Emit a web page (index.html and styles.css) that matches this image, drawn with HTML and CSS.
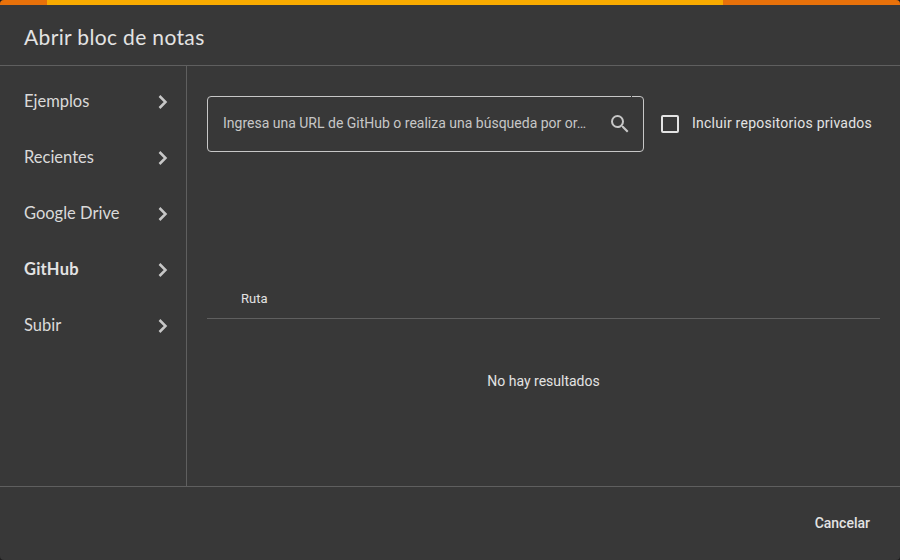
FILE: index.html
```html
<!DOCTYPE html>
<html lang="es">
<head>
<meta charset="utf-8">
<title>Abrir bloc de notas</title>
<link rel="stylesheet" href="styles.css">
</head>
<body>
<div class="dialog">
  <div class="progress"><div class="progress-bar"></div></div>
  <header class="header"><h1 class="title">Abrir bloc de notas</h1></header>
  <div class="body">
    <nav class="tabs">
      <a class="tab"><span class="tab-label">Ejemplos</span><svg class="chevron" viewBox="0 0 24 24"><path d="M9.5 6l6 6-6 6"/></svg></a>
      <a class="tab"><span class="tab-label">Recientes</span><svg class="chevron" viewBox="0 0 24 24"><path d="M9.5 6l6 6-6 6"/></svg></a>
      <a class="tab"><span class="tab-label">Google Drive</span><svg class="chevron" viewBox="0 0 24 24"><path d="M9.5 6l6 6-6 6"/></svg></a>
      <a class="tab selected"><span class="tab-label">GitHub</span><svg class="chevron" viewBox="0 0 24 24"><path d="M9.5 6l6 6-6 6"/></svg></a>
      <a class="tab"><span class="tab-label">Subir</span><svg class="chevron" viewBox="0 0 24 24"><path d="M9.5 6l6 6-6 6"/></svg></a>
    </nav>
    <main class="content">
      <div class="search-row">
        <div class="field">
          <span class="placeholder">Ingresa una URL de GitHub o realiza una búsqueda por or…</span>
          <svg class="search" viewBox="0 0 24 24"><path d="M15.5 14h-.79l-.28-.27A6.47 6.47 0 0 0 16 9.5 6.5 6.5 0 1 0 9.5 16c1.61 0 3.09-.59 4.23-1.57l.27.28v.79l5 4.99L20.49 19l-4.99-5zm-6 0C7.01 14 5 11.99 5 9.5S7.01 5 9.5 5 14 7.01 14 9.5 11.99 14 9.5 14z"/></svg>
        </div>
        <label class="private"><span class="checkbox"></span><span class="private-label">Incluir repositorios privados</span></label>
      </div>
      <div class="table-head">Ruta</div>
      <div class="empty">No hay resultados</div>
    </main>
  </div>
  <footer class="footer"><span class="cancel">Cancelar</span></footer>
</div>
</body>
</html>
```
FILE: styles.css
```css
* { box-sizing: border-box; }
body { margin: 0; background: #1d1c1d; font-family: Roboto, sans-serif; color: #e3e3e3; }
.dialog { display: flex; flex-direction: column; width: 900px; height: 560px; background: #383838; border-radius: 4px; overflow: hidden; }
.progress { height: 5px; background: #e8710a; flex: none; }
.progress-bar { height: 5px; margin-left: 47px; width: 676px; background: #f9ab00; }
.header { height: 61px; flex: none; padding: 0 24px; border-bottom: 1px solid #5f5f5f; }
.title { margin: 0; font: 400 21px/64px Lato, sans-serif; color: #e3e3e3; letter-spacing: .35px; }
.body { display: flex; height: 420px; flex: none; }
.tabs { width: 187px; flex: none; padding-top: 8px; border-right: 1px solid #5f5f5f; }
.tab { display: flex; align-items: center; justify-content: space-between; height: 56px; padding: 0 12px 0 24px; font: 400 16.5px/24px Lato, sans-serif; color: #dadada; }
.tab-label { padding-bottom: 2px; }
.tab.selected { font-weight: 700; color: #e3e3e3; letter-spacing: .2px; }
.chevron { width: 24px; height: 24px; fill: none; stroke: #c7c7c7; stroke-width: 2.5; }
.content { flex: 1; padding: 30px 20px 0; }
.search-row { display: flex; align-items: center; height: 56px; }
.field { position: relative; display: flex; align-items: center; justify-content: space-between; width: 437px; height: 56px; padding: 0 11px 0 15px; border: 1px solid #c7c7c7; border-radius: 4px; }
/* Seam of the outlined border */
.field::after { content: ""; position: absolute; top: -1px; right: 11px; width: 1px; height: 1px; background: #383838; }
.placeholder { font-size: 14px; line-height: 20px; padding-bottom: 2px; color: #c7c7c7; white-space: nowrap; }
.search { width: 24px; height: 24px; fill: #c7c7c7; }
.private { display: flex; align-items: center; margin-left: 17px; }
.checkbox { width: 18px; height: 18px; border: 2px solid #e3e3e3; border-radius: 2px; }
.private-label { margin-left: 13px; padding-bottom: 2px; font-size: 14px; line-height: 20px; letter-spacing: .25px; white-space: nowrap; }
.table-head { height: 41px; margin-top: 126px; padding-left: 34px; font-size: 13px; line-height: 41px; border-bottom: 1px solid #5f5f5f; }
.empty { margin-top: 52px; text-align: center; font-size: 14px; line-height: 20px; }
.footer { display: flex; align-items: center; justify-content: flex-end; height: 74px; padding: 0 30px 2px 0; border-top: 1px solid #5f5f5f; }
.cancel { font-size: 14px; line-height: 20px; font-weight: 500; }
```
